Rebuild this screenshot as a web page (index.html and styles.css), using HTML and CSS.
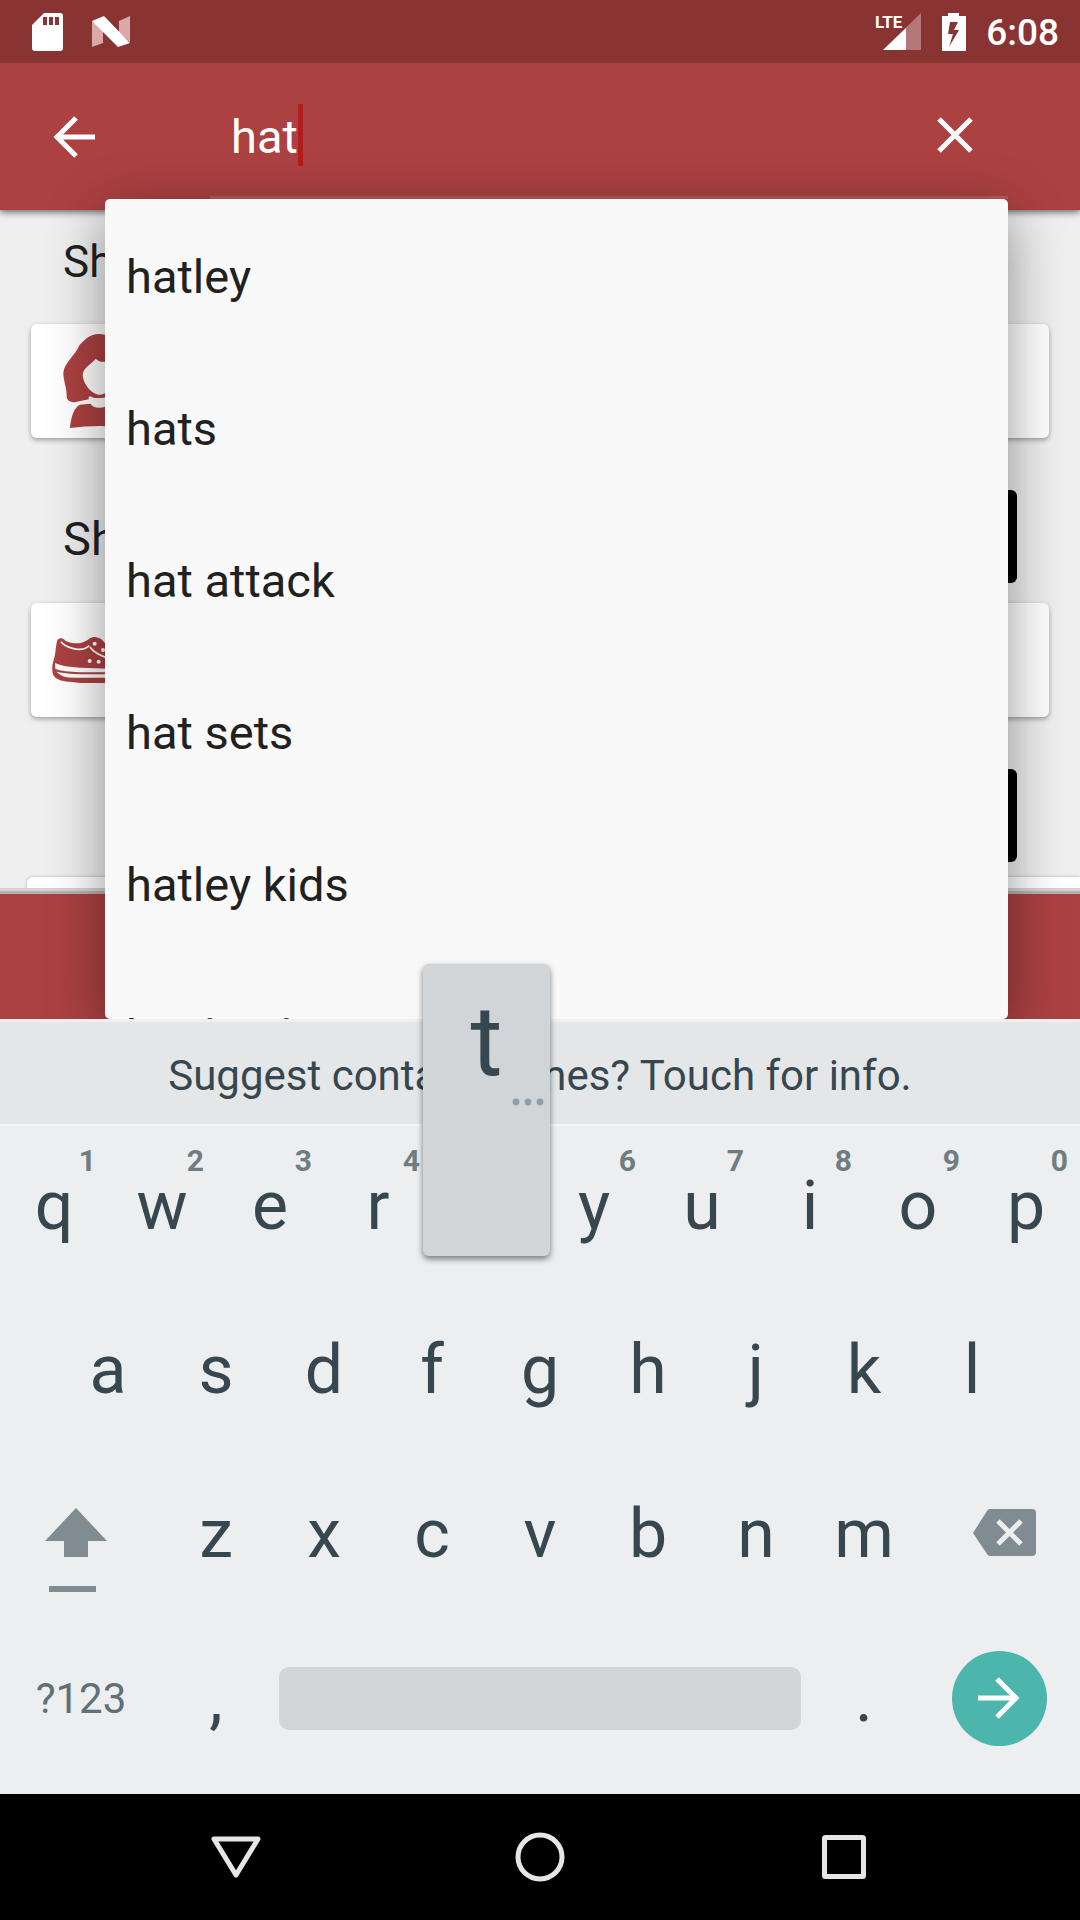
FILE: index.html
```html
<!DOCTYPE html>
<html lang="en">
<head>
<meta charset="utf-8">
<meta name="viewport" content="width=device-width, initial-scale=1">
<title>Search</title>
<link rel="stylesheet" href="styles.css">
</head>
<body>
<header class="status">
  <svg class="status-icon" width="32" height="38" viewBox="0 0 32 38" aria-hidden="true"><path fill="#fff" fill-rule="evenodd" d="M12 0H28Q31 0 31 3V35Q31 38 28 38H3Q0 38 0 35V12ZM11 4V12H15V4ZM17 4V12H21V4ZM23 4V12H27V4Z"/></svg>
  <svg class="status-icon" width="38" height="32" viewBox="0 0 38 32" aria-hidden="true"><path fill="#dca9a9" d="M0 5L11 14V27L0 31ZM38 0V26L27 17V5Z"/><path fill="#fff" d="M0 5L12 0L38 27L26 31Z"/></svg>
  <span class="spacer"></span>
  <svg class="signal" width="46" height="38" viewBox="0 0 46 38" aria-label="LTE signal"><path fill="#b47777" d="M46 0V37H8Z"/><path fill="#8a3333" d="M0 0H26V19H0Z"/><path fill="#fff" d="M31 15V37H8Z"/><text class="lte" x="0" y="15">LTE</text></svg>
  <svg class="battery" width="24" height="38" viewBox="0 0 24 38" aria-label="Charging"><path fill="#fff" fill-rule="evenodd" d="M6 0H17V3H24V38H0V3H6ZM8 9L6 21H11L7 34L17 17H12L16 9Z"/></svg>
  <time class="clock">6:08</time>
</header>

<div class="app">
  <div class="appbar">
    <button class="icon-btn back" type="button" aria-label="Back"><svg width="42" height="42" viewBox="0 0 42 42" aria-hidden="true"><path fill="none" stroke="#fff" stroke-width="5" d="M42 21H4M23 2L4 21L23 40"/></svg></button>
    <div class="field">
      <input class="query" type="text" value="hat" aria-label="Search"><span class="caret"></span>
      <button class="icon-btn clear" type="button" aria-label="Clear"><svg width="36" height="36" viewBox="0 0 36 36" aria-hidden="true"><path fill="none" stroke="#fff" stroke-width="5" d="M2 2L34 34M34 2L2 34"/></svg></button>
    </div>
  </div>

  <main class="content">
    <section class="shop">
      <div class="shop-head"><h2 class="shop-title">Sh</h2></div>
      <div class="card">
        <svg class="card-icon portrait" width="74" height="96" viewBox="186 399 222 288" aria-hidden="true"><path fill="#ac4142" fill-rule="evenodd" d="M297 402C270 402 254 419 238 436C226 466 192 490 190 518C190 545 201 562 200 590C201 602 212 606 224 607L266 598V590L273 589C280 596 290 594 302 594C312 594 320 592 328 588L332 598L376 607C388 606 396 602 397 590C396 562 406 545 406 518C404 490 370 466 358 436C342 419 326 402 297 402ZM287 476C277 490 250 502 248 524C250 555 278 584 299 584C322 584 348 555 350 524C348 505 334 486 326 476C316 490 298 487 287 476Z"/><path fill="#ac4142" d="M210 684C213 650 222 622 240 614L271 611C276 618 284 623 298 623C312 623 320 618 326 611L358 614C376 622 385 650 388 684Q300 672 210 684Z"/></svg>
      </div>
    </section>
    <section class="shop">
      <div class="shop-head"><h2 class="shop-title large">Sh</h2><button class="more" type="button" aria-label="More"></button></div>
      <div class="card">
        <svg class="card-icon" width="94" height="48" viewBox="156 531 282 144" aria-hidden="true"><path fill="#ac4142" d="M172 544C180 534 190 538 196 545C220 556 244 556 264 542C276 530 292 532 306 542L350 590C380 606 430 600 435 632C438 660 410 670 380 672H240C210 668 168 670 159 646C155 632 157 616 160 606C168 584 166 564 172 544Z"/><path fill="none" stroke="#fff" stroke-width="5" d="M183 548C190 560 240 586 268 560M270 564C280 580 300 590 330 600"/><path fill="#fff" d="M165 612Q190 624 240 626L424 632V640H240Q190 638 166 630ZM170 638Q200 644 240 646H420V656H240Q186 660 170 638Z"/><g fill="#fff"><circle cx="284" cy="554" r="6"/><circle cx="309" cy="573" r="6"/><circle cx="269" cy="606" r="6"/><circle cx="296" cy="608" r="6"/></g></svg>
      </div>
    </section>
    <section class="shop">
      <div class="shop-head"><button class="more" type="button" aria-label="More"></button></div>
    </section>
    <div class="sheet"></div>
  </main>
  <footer class="bottombar"></footer>

  <ul class="suggestions">
    <li><button class="suggestion" type="button">hatley</button></li>
    <li><button class="suggestion" type="button">hats</button></li>
    <li><button class="suggestion" type="button">hat attack</button></li>
    <li><button class="suggestion" type="button">hat sets</button></li>
    <li><button class="suggestion" type="button">hatley kids</button></li>
    <li><button class="suggestion" type="button">hat back</button></li>
  </ul>
</div>

<div class="keyboard">
  <button class="strip" type="button">Suggest contact names? Touch for info.</button>
  <div class="keys">
    <div class="row">
      <button class="key" type="button">q<span class="hint">1</span></button>
      <button class="key" type="button">w<span class="hint">2</span></button>
      <button class="key" type="button">e<span class="hint">3</span></button>
      <button class="key" type="button">r<span class="hint">4</span></button>
      <button class="key pressed" type="button"><span class="preview">t<svg class="dots" width="32" height="8" viewBox="0 0 32 8" aria-hidden="true"><g fill="#90a0a8"><circle cx="4" cy="4" r="3.4"/><circle cx="16" cy="4" r="3.4"/><circle cx="28" cy="4" r="3.4"/></g></svg></span></button>
      <button class="key" type="button">y<span class="hint">6</span></button>
      <button class="key" type="button">u<span class="hint">7</span></button>
      <button class="key" type="button">i<span class="hint">8</span></button>
      <button class="key" type="button">o<span class="hint">9</span></button>
      <button class="key" type="button">p<span class="hint">0</span></button>
    </div>
    <div class="row inset">
      <button class="key" type="button">a</button>
      <button class="key" type="button">s</button>
      <button class="key" type="button">d</button>
      <button class="key" type="button">f</button>
      <button class="key" type="button">g</button>
      <button class="key" type="button">h</button>
      <button class="key" type="button">j</button>
      <button class="key" type="button">k</button>
      <button class="key" type="button">l</button>
    </div>
    <div class="row">
      <button class="key wide" type="button" aria-label="Shift"><svg width="72" height="116" viewBox="0 0 72 116" aria-hidden="true"><path fill="#808c91" d="M31 32L62 65H43V81H19V65H0ZM4 110H51V116H4Z"/></svg></button>
      <button class="key" type="button">z</button>
      <button class="key" type="button">x</button>
      <button class="key" type="button">c</button>
      <button class="key" type="button">v</button>
      <button class="key" type="button">b</button>
      <button class="key" type="button">n</button>
      <button class="key" type="button">m</button>
      <button class="key wide" type="button" aria-label="Backspace"><svg width="74" height="50" viewBox="0 0 74 50" aria-hidden="true"><path fill="#808c91" d="M28 0H70Q74 0 74 4V43Q74 47 70 47H28Q26 47 25 45L11 24L25 2Q26 0 28 0Z"/><path stroke="#eceef0" stroke-width="5" d="M36 12L59 35M59 12L36 35"/></svg></button>
    </div>
    <div class="row">
      <button class="key wide mode" type="button">?123</button>
      <button class="key" type="button">,</button>
      <button class="key space" type="button" aria-label="Space"><span class="space-bar"></span></button>
      <button class="key" type="button">.</button>
      <button class="key wide" type="button" aria-label="Go"><span class="go"><svg width="42" height="42" viewBox="0 0 42 42" aria-hidden="true"><path fill="none" stroke="#fff" stroke-width="5" d="M0 21H38M19 2L38 21L19 40"/></svg></span></button>
    </div>
  </div>
</div>

<nav class="navbar">
  <button class="nav-btn" type="button" aria-label="Back"><svg width="50" height="42" viewBox="0 0 50 42" aria-hidden="true"><path fill="none" stroke="#e6e6e6" stroke-width="5" stroke-linejoin="round" d="M3 3H47L25 39Z"/></svg></button>
  <button class="nav-btn" type="button" aria-label="Home"><svg width="50" height="50" viewBox="0 0 50 50" aria-hidden="true"><circle cx="25" cy="25" r="22" fill="none" stroke="#e6e6e6" stroke-width="5"/></svg></button>
  <button class="nav-btn" type="button" aria-label="Recent apps"><svg width="44" height="44" viewBox="0 0 44 44" aria-hidden="true"><rect x="2.500" y="2.500" width="39" height="39" rx="1" fill="none" stroke="#e6e6e6" stroke-width="5" stroke-linejoin="round"/></svg></button>
</nav>
</body>
</html>
```
FILE: styles.css
```css
*, *::before, *::after { box-sizing: border-box; }

body {
  margin: 0;
  min-height: 100vh;
  display: flex;
  flex-direction: column;
  font-family: Roboto, "Noto Sans", sans-serif;
  color: #212121;
  background: #efefef;
}

button {
  margin: 0;
  padding: 0;
  border: 0;
  background: none;
  color: inherit;
  font: inherit;
}

svg { display: block; flex: none; }

/* Status bar */
.status {
  display: flex;
  align-items: center;
  height: 63px;
  padding: 0 21px 0 32px;
  background: #8a3333;
}
.status-icon { margin-right: 28px; }
.spacer { flex: 1; }
.signal { margin-right: 21px; }
.battery { margin-right: 20px; }
.lte {
  fill: #fff;
  font: bold 17px "Liberation Sans Narrow", Roboto, sans-serif;
}
.clock {
  padding-top: 2px;
  color: #fff;
  font-size: 37px;
  font-weight: 500;
  line-height: 44px;
}

/* App */
.app {
  position: relative;
  flex: 1 1 0;
  min-height: 480px;
  display: flex;
  flex-direction: column;
  overflow: hidden;
}
.appbar {
  position: relative;
  flex: none;
  display: flex;
  height: 147px;
  padding-right: 72px;
  background: #ac4142;
  box-shadow: 0 2px 7px rgba(0, 0, 0, .6);
}
.icon-btn {
  display: flex;
  align-items: center;
  justify-content: center;
}
.back { width: 147px; }
.field {
  flex: 1;
  display: flex;
  align-items: center;
  height: 136px;
  margin-left: 63px;
  padding: 10px 0 0 21px;
  border-bottom: 3px solid #b25b5b;
}
.query {
  field-sizing: content;
  padding: 4px 0 0;
  border: 0;
  outline: 0;
  background: none;
  color: #fff;
  font: 47px/60px Roboto, "Noto Sans", sans-serif;
}
.caret {
  width: 5px;
  height: 62px;
  background: #b21c1f;
}
.clear {
  width: 106px;
  height: 106px;
  margin-left: auto;
}

.content {
  flex: 1 1 0;
  min-height: 0;
  overflow: hidden;
  display: flex;
  flex-direction: column;
  background: #efefef;
}
.shop {
  flex: none;
  padding: 0 31px 51px;
}
.shop-head {
  display: flex;
  align-items: center;
  justify-content: space-between;
  height: 94px;
  margin-bottom: 20px;
  padding: 9px 32px 0;
}
.shop + .shop .shop-head { padding-top: 0; }
.shop-title {
  margin: 0;
  font-size: 44px;
  font-weight: 400;
}
.shop-title.large {
  padding-top: 5px;
  font-size: 47px;
}
.more {
  width: 280px;
  height: 93px;
  margin-left: auto;
  border-radius: 6px;
  background: #000;
}
.card {
  display: flex;
  align-items: center;
  height: 114px;
  border-radius: 6px;
  background: #fff;
  box-shadow: 0 2px 5px rgba(0, 0, 0, .35);
}
.card-icon { margin: 0 21px; }
.card-icon.portrait { margin: 0 31px; }
.sheet {
  flex: none;
  height: 60px;
  margin: -56px 0 0 27px;
  border-radius: 6px 0 0;
  background: #fff;
  box-shadow: 0 0 3px rgba(0, 0, 0, .3);
}
.bottombar {
  position: relative;
  flex: none;
  height: 125px;
  background: #ac4142;
  box-shadow: 0 -3px 0 #b9b1b1, 0 -6px 0 #d4d4d4;
}

.suggestions {
  position: absolute;
  top: 136px;
  right: 72px;
  bottom: 0;
  left: 105px;
  margin: 0;
  padding: 0;
  overflow: hidden;
  list-style: none;
  border-radius: 5px;
  background: #f9f9f9;
  box-shadow: 0 14px 56px rgba(0, 0, 0, .42);
}
.suggestion {
  display: block;
  width: 100%;
  height: 152px;
  padding: 3px 21px 0;
  text-align: left;
  font-size: 47px;
}

/* Keyboard */
.keyboard {
  position: relative;
  flex: none;
  color: #37474f;
  background: #eceef0;
}
.strip {
  display: block;
  width: 100%;
  height: 105px;
  padding-top: 5px;
  border-top: 3px solid #efefef;
  background: #e4e6e8;
  font-size: 42px;
  text-align: center;
}
.keys {
  padding-bottom: 14px;
  box-shadow: inset 0 2px 0 #f4f5f6;
}
.row { display: flex; }
.row.inset { padding: 0 5%; }
.key {
  position: relative;
  flex: 2 1 0;
  min-width: 0;
  height: 164px;
  display: flex;
  align-items: center;
  justify-content: center;
  font-size: 68px;
}
.key.wide { flex-grow: 3; }
.key.space { flex-grow: 10; }
.key.mode {
  color: #607076;
  font-size: 42px;
}
.hint {
  position: absolute;
  top: 19px;
  right: 12px;
  color: #6f7c80;
  font-size: 30px;
  font-weight: 700;
  line-height: 36px;
}
.space-bar {
  flex: 1;
  height: 63px;
  margin: 0 9px;
  border-radius: 10px;
  background: #d1d5d8;
}
.go {
  display: flex;
  align-items: center;
  justify-content: center;
  width: 95px;
  height: 95px;
  border-radius: 50%;
  background: #4db6ac;
}
.preview {
  position: absolute;
  right: -10px;
  bottom: 32px;
  left: -9px;
  height: 292px;
  padding-top: 20px;
  border-radius: 6px;
  background: #d1d5d8;
  box-shadow: 0 3px 6px rgba(0, 0, 0, .5);
  font-size: 98px;
  line-height: 116px;
  text-align: center;
}
.dots {
  position: absolute;
  top: 134px;
  right: 6px;
}

/* System navigation */
.navbar {
  flex: none;
  display: flex;
  justify-content: center;
  height: 126px;
  background: #000;
}
.nav-btn {
  display: flex;
  align-items: center;
  justify-content: center;
  width: 304px;
}
```
